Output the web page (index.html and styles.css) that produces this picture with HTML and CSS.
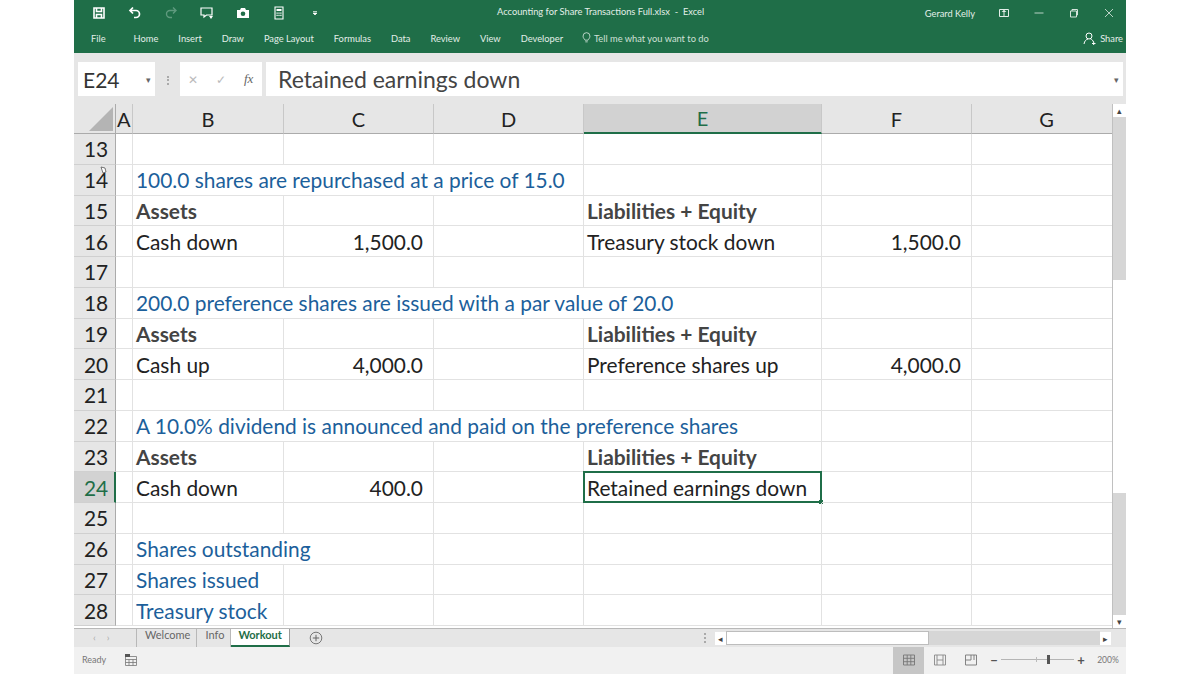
FILE: index.html
```html
<!DOCTYPE html>
<html lang="en">
<head>
    <meta charset="UTF-8">
    <title>Accounting for Share Transactions Full.xlsx - Excel</title>
    <link rel="stylesheet" href="styles.css">
</head>
<body>
<div class="window">
    <div class="ribbon">
        <div class="title-row">
            <div class="qat">
                <svg class="qat-icon" viewBox="0 0 14 14"><path d="M2 2h10v10H2z M4.500 2v3.500h5V2 M4.500 12V8.500h5V12" fill="none" stroke="#fff" stroke-width="1.600"/></svg>
                <svg class="qat-icon" viewBox="0 0 14 14"><path d="M2.500 4.500H8a3.200 3.200 0 0 1 0 7H6 M5 1.500l-3 3 3 3" fill="none" stroke="#fff" stroke-width="1.700"/></svg>
                <svg class="qat-icon dim" viewBox="0 0 14 14"><path d="M11.500 4.500H6a3.200 3.200 0 0 0 0 7h2 M9 1.500l3 3-3 3" fill="none" stroke="#5f9a7e" stroke-width="1.400"/></svg>
                <svg class="qat-icon" viewBox="0 0 14 14"><path d="M1 2h11v7H6.500L4 11V9H1z" fill="none" stroke="#fff" stroke-width="1.200"/><path d="M9 10h4l-2 3z" fill="#fff"/></svg>
                <svg class="qat-icon" viewBox="0 0 14 14"><path d="M1 4h3l1-2h4l1 2h3v8H1z" fill="#fff"/><circle cx="7" cy="7.800" r="2.300" fill="#1f6e48"/></svg>
                <svg class="qat-icon" viewBox="0 0 14 14"><path d="M3 1h8v12H3z" fill="none" stroke="#fff" stroke-width="1.100"/><path d="M4.500 3h5v2h-5z M4.500 6.500h1.200v1.200H4.500z M6.400 6.500h1.200v1.200H6.400z M8.300 6.500h1.200v1.200H8.300z M4.500 8.700h1.200v1.200H4.500z M6.400 8.700h1.200v1.200H6.400z M8.300 8.700h1.200v1.200H8.300z" fill="#fff"/></svg>
                <svg class="qat-more" viewBox="0 0 6 6"><path d="M1 1.500h4 M1 3h4L3 5z" stroke="#fff" stroke-width=".7" fill="#fff"/></svg>
            </div>
            <div class="doc-title">Accounting for Share Transactions Full.xlsx&nbsp; -&nbsp; Excel</div>
            <div class="win-controls">
                <span class="user">Gerard Kelly</span>
                <svg class="win-icon" viewBox="0 0 12 12"><path d="M1.500 2.500h9v7h-9z M6 2.500v7" fill="none" stroke="#e3eee8"/><path d="M3.500 5L6 3l2.500 2z" fill="#e3eee8"/></svg>
                <svg class="win-icon" viewBox="0 0 12 12"><path d="M1.500 6h9" stroke="#b9d2c5"/></svg>
                <svg class="win-icon" viewBox="0 0 12 12"><path d="M2.500 4h6v6h-6z M4 4V2.500h5.500V8H8.500" fill="none" stroke="#d5e4dc"/></svg>
                <svg class="win-icon" viewBox="0 0 12 12"><path d="M2 2l8 8 M10 2l-8 8" stroke="#b9d2c5"/></svg>
            </div>
        </div>
        <div class="tab-row">
            <nav class="tabs">
                <span class="tab tab-file">File</span>
                <span class="tab">Home</span>
                <span class="tab">Insert</span>
                <span class="tab">Draw</span>
                <span class="tab">Page Layout</span>
                <span class="tab">Formulas</span>
                <span class="tab">Data</span>
                <span class="tab">Review</span>
                <span class="tab">View</span>
                <span class="tab">Developer</span>
                <span class="tell">
                    <svg class="bulb" viewBox="0 0 10 14"><path d="M3.200 9.500C2.600 8 1 7.200 1 4.800a4 4 0 0 1 8 0C9 7.200 7.400 8 6.800 9.500z M3.600 11.500h2.800" fill="none" stroke="#e4efe9" stroke-width=".9"/></svg>
                    Tell me what you want to do
                </span>
            </nav>
            <span class="share">
                <svg class="share-icon" viewBox="0 0 13 13"><circle cx="6" cy="4" r="3" fill="none" stroke="#fff"/><path d="M1 12c.5-3 2-4.500 4-5 M7.500 7c1.500.5 2.500 1.500 3 3 M9 11.500h3.500 M10.700 9.800v3.200" fill="none" stroke="#fff"/></svg>
                Share
            </span>
        </div>
    </div>

    <div class="formula-bar">
        <div class="name-box"><span>E24</span><i class="caret">&#9662;</i></div>
        <div class="bar-grip"></div>
        <div class="fx-box">
            <span class="fx-mark">&#10005;</span>
            <span class="fx-mark">&#10003;</span>
            <span class="fx-label">fx</span>
        </div>
        <div class="formula-input"><span>Retained earnings down</span><i class="caret">&#9662;</i></div>
    </div>

    <div class="sheet-area">
        <div class="sheet">
            <div class="head corner"><svg class="corner-mark" viewBox="0 0 24 24"><path d="M24 0v24H0z" fill="#b4b4b4"/></svg></div>
            <div class="head col-a">A</div>
            <div class="head">B</div>
            <div class="head">C</div>
            <div class="head">D</div>
            <div class="head head-on">E</div>
            <div class="head">F</div>
            <div class="head">G</div>

            <div class="num">13</div><div class="cell"></div><div class="cell"></div><div class="cell"></div><div class="cell"></div><div class="cell"></div><div class="cell"></div><div class="cell"></div>

            <div class="num">14<svg class="cursor" viewBox="0 0 8 10"><path d="M2 1l4 1 1 4-3 1z" fill="#fff" stroke="#555" stroke-width=".8"/></svg></div><div class="cell"></div><div class="cell blue span3">100.0 shares are repurchased at a price of 15.0</div><div class="cell"></div><div class="cell"></div><div class="cell"></div>

            <div class="num">15</div><div class="cell"></div><div class="cell bold">Assets</div><div class="cell"></div><div class="cell"></div><div class="cell bold">Liabilities + Equity</div><div class="cell"></div><div class="cell"></div>

            <div class="num">16</div><div class="cell"></div><div class="cell">Cash down</div><div class="cell right">1,500.0</div><div class="cell"></div><div class="cell">Treasury stock down</div><div class="cell right">1,500.0</div><div class="cell"></div>

            <div class="num">17</div><div class="cell"></div><div class="cell"></div><div class="cell"></div><div class="cell"></div><div class="cell"></div><div class="cell"></div><div class="cell"></div>

            <div class="num">18</div><div class="cell"></div><div class="cell blue span4">200.0 preference shares are issued with a par value of 20.0</div><div class="cell"></div><div class="cell"></div>

            <div class="num">19</div><div class="cell"></div><div class="cell bold">Assets</div><div class="cell"></div><div class="cell"></div><div class="cell bold">Liabilities + Equity</div><div class="cell"></div><div class="cell"></div>

            <div class="num">20</div><div class="cell"></div><div class="cell">Cash up</div><div class="cell right">4,000.0</div><div class="cell"></div><div class="cell">Preference shares up</div><div class="cell right">4,000.0</div><div class="cell"></div>

            <div class="num">21</div><div class="cell"></div><div class="cell"></div><div class="cell"></div><div class="cell"></div><div class="cell"></div><div class="cell"></div><div class="cell"></div>

            <div class="num">22</div><div class="cell"></div><div class="cell blue span4">A 10.0% dividend is announced and paid on the preference shares</div><div class="cell"></div><div class="cell"></div>

            <div class="num">23</div><div class="cell"></div><div class="cell bold">Assets</div><div class="cell"></div><div class="cell"></div><div class="cell bold">Liabilities + Equity</div><div class="cell"></div><div class="cell"></div>

            <div class="num num-on">24</div><div class="cell"></div><div class="cell">Cash down</div><div class="cell right">400.0</div><div class="cell"></div><div class="cell active">Retained earnings down<i class="fill-handle"></i></div><div class="cell"></div><div class="cell"></div>

            <div class="num">25</div><div class="cell"></div><div class="cell"></div><div class="cell"></div><div class="cell"></div><div class="cell"></div><div class="cell"></div><div class="cell"></div>

            <div class="num">26</div><div class="cell"></div><div class="cell blue span2">Shares outstanding</div><div class="cell"></div><div class="cell"></div><div class="cell"></div><div class="cell"></div>

            <div class="num">27</div><div class="cell"></div><div class="cell blue">Shares issued</div><div class="cell"></div><div class="cell"></div><div class="cell"></div><div class="cell"></div><div class="cell"></div>

            <div class="num">28</div><div class="cell"></div><div class="cell blue">Treasury stock</div><div class="cell"></div><div class="cell"></div><div class="cell"></div><div class="cell"></div><div class="cell"></div>
        </div>
        <div class="vscroll">
            <span class="scroll-btn">&#9652;</span>
            <div class="vtrack"><div class="vthumb"></div></div>
            <span class="scroll-btn">&#9662;</span>
        </div>
    </div>

    <div class="sheet-tabs">
        <div class="tab-nav"><span>&#8249;</span><span>&#8250;</span></div>
        <div class="sheet-tab">Welcome</div>
        <div class="sheet-tab">Info</div>
        <div class="sheet-tab sheet-tab-on">Workout</div>
        <svg class="add-sheet" viewBox="0 0 14 14"><circle cx="7" cy="7" r="5.800" fill="none" stroke="#777"/><path d="M7 3.800v6.400 M3.800 7h6.400" stroke="#666"/></svg>
        <div class="hscroll">
            <span class="split-grip"></span>
            <span class="scroll-btn">&#9666;</span>
            <div class="htrack"><div class="hthumb"></div></div>
            <span class="scroll-btn">&#9656;</span>
        </div>
    </div>

    <div class="status-bar">
        <span class="ready">Ready</span>
        <svg class="macro" viewBox="0 0 14 14"><path d="M1.500 3.500h11v9h-11z M1.500 6.500h11 M5 6.500v6 M9 6.500v6 M1.500 9.500h11" fill="none" stroke="#777" stroke-width=".8"/><path d="M1 1h5v3H1z" fill="#555"/></svg>
        <div class="views">
            <span class="view view-on"><svg viewBox="0 0 14 14"><path d="M1.500 2h11v10h-11z M1.500 5.300h11 M1.500 8.700h11 M5.200 2v10 M8.800 2v10" fill="none" stroke="#777" stroke-width=".9"/></svg></span>
            <span class="view"><svg viewBox="0 0 14 14"><path d="M1.500 2h11v10h-11z M4 2v10 M10 2v10 M4 7h6" fill="none" stroke="#888" stroke-width=".9"/></svg></span>
            <span class="view"><svg viewBox="0 0 14 14"><path d="M1.500 2h11v10h-11z M7 2v5 M1.500 7H7 M10 2v5" fill="none" stroke="#777" stroke-width=".9"/></svg></span>
        </div>
        <div class="zoom-ctl">
            <span class="zoom-sign">&#8722;</span>
            <div class="slider"><i class="slider-mid"></i><i class="slider-knob"></i></div>
            <span class="zoom-sign">+</span>
        </div>
        <span class="zoom-pct">200%</span>
    </div>
</div>
</body>
</html>
```

FILE: styles.css
```css
* {
    box-sizing: border-box;
}

body {
    margin: 0;
    background-color: #fff;
    font-family: "Lato", "Liberation Sans", sans-serif;
    overflow: hidden;
}

.window {
    width: 1052px;
    height: 674px;
    margin-left: 74px;
    display: flex;
    flex-direction: column;
    background-color: #e6e6e6;
}

/* ribbon */
.ribbon {
    height: 53px;
    background-color: #1f6e48;
    color: #e3eee8;
    font-size: 9.3px;
    flex: none;
}

.title-row {
    height: 26px;
    display: flex;
    align-items: center;
    position: relative;
}

.qat {
    display: flex;
    align-items: center;
    padding-left: 18px;
    gap: 22px;
}

.qat-icon {
    width: 14px;
    height: 14px;
}

.qat-more {
    width: 6px;
    height: 6px;
    margin-left: 4px;
}

.doc-title {
    position: absolute;
    left: 423px;
    top: 6px;
}

.win-controls {
    margin-left: auto;
    display: flex;
    align-items: center;
    padding-right: 11px;
    gap: 23px;
}

.win-icon {
    width: 12px;
    height: 12px;
}

.tab-row {
    height: 27px;
    display: flex;
    align-items: center;
    justify-content: space-between;
    padding: 0 3px 3px 17px;
}

.tabs {
    display: flex;
    align-items: center;
    gap: 20px;
}

.tab-file {
    margin-right: 8px;
}

.tell {
    display: flex;
    align-items: center;
    gap: 3px;
    margin-left: -1px;
    color: #cfe0d7;
}

.bulb {
    width: 9px;
    height: 12px;
}

.share {
    display: flex;
    align-items: center;
    gap: 4px;
}

.share-icon {
    width: 13px;
    height: 13px;
}

/* formula bar */
.formula-bar {
    height: 51px;
    flex: none;
    display: flex;
    padding: 9px 3px 8px 4px;
    background-color: #e6e6e6;
    font-size: 23px;
    color: #444;
}

.name-box {
    width: 77px;
    background-color: #fff;
    display: flex;
    align-items: center;
    justify-content: space-between;
    padding: 0 4px 0 5px;
    color: #333;
    font-size: 21px;
}

.caret {
    font-style: normal;
    font-size: 9px;
    color: #666;
}

.bar-grip {
    width: 25px;
    position: relative;
}

.bar-grip::before {
    content: "";
    position: absolute;
    left: 12px;
    top: 14px;
    height: 9px;
    border-left: 2px dotted #aaa;
}

.fx-box {
    width: 82px;
    background-color: #fff;
    display: flex;
    align-items: center;
    gap: 15px;
    padding-left: 8px;
}

.fx-mark {
    font-size: 12px;
    color: #bbb;
    width: 13px;
}

.fx-label {
    font-family: "Liberation Serif", serif;
    font-style: italic;
    font-size: 13px;
    color: #666;
}

.formula-input {
    flex: 1;
    margin-left: 4px;
    background-color: #fff;
    display: flex;
    align-items: center;
    justify-content: space-between;
    padding: 0 4px 0 12px;
}

/* sheet */
.sheet-area {
    flex: 1;
    display: flex;
    min-height: 0;
}

.sheet {
    flex: 1;
    min-width: 0;
    display: grid;
    grid-template-columns: 42px 17px 151px 150px 150px 238px 150px 150px;
    grid-template-rows: 30px repeat(16, 30.75px);
    overflow: hidden;
    background-color: #fff;
    font-size: 20.9px;
    color: #222;
}

.head {
    background-color: #e6e6e6;
    border-right: 1px solid #c8c8c8;
    border-bottom: 1px solid #ababab;
    display: flex;
    align-items: center;
    justify-content: center;
    font-size: 20px;
    color: #222;
}

.corner {
    position: relative;
    border-right: 1px solid #ababab;
}

.corner-mark {
    position: absolute;
    right: 2px;
    bottom: 2px;
    width: 24px;
    height: 24px;
}

.col-a {
    justify-content: flex-start;
    padding-left: 1px;
}

.head-on {
    background-color: #d2d2d2;
    border-bottom: 2px solid #1f6e48;
    color: #1f6e48;
}

.num {
    background-color: #e6e6e6;
    border-right: 1px solid #ababab;
    border-bottom: 1px solid #d0d0d0;
    display: flex;
    align-items: center;
    justify-content: flex-start;
    padding-left: 10px;
    position: relative;
}

.num-on {
    background-color: #d2d2d2;
    border-right: 2px solid #1f6e48;
    color: #1f6e48;
}

.cursor {
    position: absolute;
    left: 25px;
    top: 1px;
    width: 8px;
    height: 10px;
}

.cell {
    border-right: 1px solid #e2e2e2;
    border-bottom: 1px solid #e2e2e2;
    display: flex;
    align-items: center;
    padding: 0 3px;
    white-space: nowrap;
    position: relative;
}

.blue {
    color: #1c5f9b;
}

.bold {
    font-weight: 700;
    color: #444;
}

.right {
    justify-content: flex-end;
    padding-right: 10px;
}

.span2 {
    grid-column: span 2;
}

.span3 {
    grid-column: span 3;
}

.span4 {
    grid-column: span 4;
}

.active {
    border: 2px solid #1f6e48;
    margin: -1px 0 0 -1px;
    padding-left: 2px;
}

.fill-handle {
    position: absolute;
    right: -3px;
    bottom: -3px;
    width: 4px;
    height: 4px;
    background-color: #1f6e48;
}

.vscroll {
    width: 14px;
    flex: none;
    display: flex;
    flex-direction: column;
    background-color: #e6e6e6;
    border-left: 1px solid #c0c0c0;
}

.scroll-btn {
    height: 13px;
    background-color: #fff;
    display: flex;
    align-items: center;
    justify-content: center;
    font-size: 9px;
    line-height: 1;
    color: #444;
    flex: none;
}

.vtrack {
    flex: 1;
    background-color: #d6d6d6;
    padding-top: 163px;
    padding-bottom: 122px;
    display: flex;
}

.vthumb {
    flex: 1;
    background-color: #fff;
}

/* sheet tabs */
.sheet-tabs {
    height: 19px;
    flex: none;
    display: flex;
    align-items: stretch;
    background-color: #e6e6e6;
    border-top: 1px solid #b8b8b8;
    font-size: 11px;
    color: #666;
}

.tab-nav {
    width: 63px;
    display: flex;
    justify-content: flex-start;
    gap: 11px;
    padding-left: 19px;
    color: #aaa;
    font-size: 10px;
    line-height: 16px;
    border-right: 1px solid #b8b8b8;
}

.sheet-tab {
    padding: 0 6px 0 8px;
    line-height: 12px;
    border-right: 1px solid #b8b8b8;
}

.sheet-tab-on {
    background-color: #fff;
    color: #1f6e48;
    font-weight: 700;
    padding: 0 7px;
    border-bottom: 2px solid #1f6e48;
    border-right: 1px solid #999;
}

.add-sheet {
    width: 14px;
    height: 14px;
    margin: 2px 0 0 19px;
}

.hscroll {
    margin-left: auto;
    display: flex;
    align-items: center;
    width: 422px;
    padding-right: 15px;
}

.split-grip {
    width: 2px;
    height: 10px;
    border-left: 2px dotted #aaa;
    margin-right: 9px;
}

.hscroll .scroll-btn {
    width: 11px;
    height: 13px;
}

.htrack {
    flex: 1;
    height: 14px;
    background-color: #d6d6d6;
    display: flex;
}

.hthumb {
    width: 203px;
    background-color: #fff;
    border: 1px solid #bdbdbd;
}

/* status bar */
.status-bar {
    height: 27px;
    flex: none;
    display: flex;
    align-items: center;
    background-color: #f1f1f1;
    padding: 0 0 2px 8px;
    font-size: 9px;
    color: #777;
}

.ready {
    width: 42px;
}

.macro {
    width: 14px;
    height: 14px;
}

.views {
    margin-left: auto;
    display: flex;
    align-self: stretch;
    margin-bottom: -2px;
}

.view {
    width: 31px;
    padding-bottom: 2px;
    display: flex;
    align-items: center;
    justify-content: center;
}

.view svg {
    width: 14px;
    height: 14px;
}

.view-on {
    background-color: #c6c6c6;
}

.zoom-ctl {
    display: flex;
    align-items: center;
    gap: 1px;
    margin-left: 4px;
    width: 95px;
}

.zoom-sign {
    font-size: 13px;
    font-weight: 700;
    color: #555;
    width: 8px;
    text-align: center;
}

.slider {
    flex: 1;
    height: 1px;
    background-color: #b5b5b5;
    position: relative;
    margin: 0 2px;
}

.slider-mid {
    position: absolute;
    left: 35px;
    top: -2px;
    width: 1px;
    height: 5px;
    background-color: #bbb;
}

.slider-knob {
    position: absolute;
    left: 46px;
    top: -4px;
    width: 3px;
    height: 9px;
    background-color: #555;
}

.zoom-pct {
    width: 40px;
    padding-left: 4px;
    text-align: center;
    font-size: 8.5px;
    margin-left: 1px;
}
```
